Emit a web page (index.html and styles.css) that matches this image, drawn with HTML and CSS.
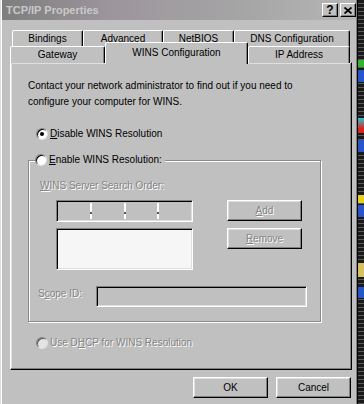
FILE: index.html
```html
<!DOCTYPE html>
<html>
<head>
    <title>TCP/IP Properties</title>
    <link rel="stylesheet" href="styles.css">
</head>
<body>

    <div class="dialog">
        <div class="titlebar">
            <span class="title">TCP/IP Properties</span>
            <div class="caption-btns">
                <span class="cap-btn help">?</span>
                <span class="cap-btn">
                    <svg width="8" height="7" viewBox="0 0 8 7"><path d="M0.5 0.5L7.5 6.5M7.5 0.5L0.5 6.5" stroke="#000" stroke-width="1.8"/></svg>
                </span>
            </div>
        </div>

        <div class="dialog-body">
            <div class="tabs">
                <div class="tab-row back">
                    <div class="tab w-bindings">Bindings</div>
                    <div class="tab w-advanced">Advanced</div>
                    <div class="tab w-netbios">NetBIOS</div>
                    <div class="tab w-dns">DNS Configuration</div>
                </div>
                <div class="tab-row front">
                    <div class="tab w-gateway">Gateway</div>
                    <div class="tab w-wins active">WINS Configuration</div>
                    <div class="tab w-ip">IP Address</div>
                </div>
            </div>

            <div class="panel">
                <p class="intro">Contact your network administrator to find out if you need to configure your computer for WINS.</p>

                <div class="radio-row disable-row">
                    <span class="radio checked"></span>
                    <span><u>D</u>isable WINS Resolution</span>
                </div>

                <fieldset class="group">
                    <legend class="radio-row">
                        <span class="radio"></span>
                        <span><u>E</u>nable WINS Resolution:</span>
                    </legend>
                    <div class="group-body">
                        <div class="search-label disabled"><u>W</u>INS Server Search Order:</div>
                        <div class="search-grid">
                            <div class="field ip-field">
                                <span class="octet"></span><span class="sep"></span>
                                <span class="octet"></span><span class="sep"></span>
                                <span class="octet"></span><span class="sep"></span>
                                <span class="octet"></span>
                            </div>
                            <button class="btn disabled"><u>A</u>dd</button>
                            <div class="field list-field"></div>
                            <button class="btn disabled"><u>R</u>emove</button>
                        </div>
                        <div class="scope-row">
                            <span class="scope-label disabled">S<u>c</u>ope ID:</span>
                            <div class="field scope-field"></div>
                        </div>
                    </div>
                </fieldset>

                <div class="radio-row dhcp-row disabled">
                    <span class="radio dim"></span>
                    <span>Use D<u>H</u>CP for WINS Resolution</span>
                </div>
            </div>

            <div class="footer">
                <button class="btn">OK</button>
                <button class="btn">Cancel</button>
            </div>
        </div>
    </div>

    <div class="desktop-strip">
        <span class="blip green"></span>
        <span class="blip blue"></span>
        <span class="blip cyan"></span>
        <span class="blip blue second"></span>
        <span class="blip yellow"></span>
        <span class="blip blue third"></span>
        <span class="blip yellow late"></span>
        <span class="blip blue last"></span>
    </div>

</body>
</html>
```

FILE: styles.css
```css
* {
    box-sizing: border-box;
}

body {
    margin: 0;
    height: 404px;
    overflow: hidden;
    display: flex;
    background-color: #111;
    color: #000;
    font-family: "Liberation Sans", Arial, sans-serif;
    font-size: 10px;
}

u {
    text-decoration-thickness: 1px;
    text-underline-offset: 1px;
}

.dialog {
    width: 358px;
    height: 404px;
    flex-shrink: 0;
    background-color: #c0c0c0;
    border-left: 1px solid #dfdfdf;
    border-right: 1px solid #000;
    box-shadow: inset 1px 0 #fff, inset -1px 0 #808080;
    padding: 0 1px;
    display: flex;
    flex-direction: column;
}

/* title bar (inactive) */
.titlebar {
    height: 20px;
    background: linear-gradient(to right, #7e7e7e, #9c959c 30%, #a6a6a6 70%, #b6b6b6);
    display: flex;
    align-items: center;
    justify-content: space-between;
    padding-left: 4px;
}

.title {
    color: #c9c9c9;
    font-size: 11px;
    font-weight: bold;
}

.caption-btns {
    display: flex;
    gap: 2px;
}

.cap-btn {
    width: 16px;
    height: 14px;
    background-color: #c0c0c0;
    border: 1px solid;
    border-color: #fff #000 #000 #fff;
    box-shadow: inset -1px -1px #808080;
    display: flex;
    align-items: center;
    justify-content: center;
}

.cap-btn.help {
    font-size: 12px;
    font-weight: bold;
    line-height: 12px;
}

.dialog-body {
    padding: 10px 4px 0 8px;
}

/* tabs */
.tabs {
    display: flex;
    flex-direction: column;
}

.tab-row {
    display: flex;
    align-items: flex-start;
    height: 16px;
}

.tab-row.back {
    margin-left: 2px;
}

.tab {
    height: 17px;
    background-color: #c0c0c0;
    border: 1px solid;
    border-bottom: 0;
    border-color: #fff #000 transparent #fff;
    border-radius: 2px 2px 0 0;
    box-shadow: inset -1px 0 #808080;
    display: flex;
    align-items: center;
    justify-content: center;
    padding-bottom: 1px;
}

.tab.active {
    height: 22px;
    margin-top: -4px;
    padding-bottom: 3px;
    position: relative;
    z-index: 1;
}

.w-bindings { width: 71px; }
.w-advanced { width: 80px; }
.w-netbios { width: 71px; }
.w-dns { width: 116px; }
.w-gateway { width: 95px; }
.w-wins { width: 143px; }
.w-ip { width: 102px; }

/* tab page */
.panel {
    height: 308px;
    border: 1px solid;
    border-color: #fff #000 #000 #fff;
    box-shadow: inset -1px -1px #808080, inset 1px 1px #dfdfdf;
    padding: 15px 0 0 17px;
}

.intro {
    margin: 0;
    width: 290px;
    line-height: 16px;
}

.radio-row {
    display: flex;
    align-items: center;
    gap: 2px;
    height: 14px;
    line-height: 14px;
}

.disable-row {
    margin: 17px 0 0 8px;
}

.radio {
    width: 12px;
    height: 12px;
    border-radius: 50%;
    background-color: #fff;
    border: 1px solid;
    border-color: #808080 #dfdfdf #dfdfdf #808080;
    box-shadow: inset 1px 1px #000;
    position: relative;
}

.radio.checked::after {
    content: "";
    position: absolute;
    left: 3px;
    top: 3px;
    width: 4px;
    height: 4px;
    border-radius: 50%;
    background-color: #000;
}

.radio.dim {
    background-color: #e4e4e4;
    box-shadow: inset 1px 1px #555;
}

.disabled {
    color: #858585;
    text-shadow: 1px 1px 0 #fff;
}

/* group box */
.group {
    width: 293px;
    margin: 12px 0 0 0;
    padding: 0;
    border: 1px solid #8a8a8a;
    box-shadow: inset 1px 1px #fff, 1px 1px #fff;
}

.group legend {
    margin-left: 6px;
    padding: 0 3px 0 0;
    background-color: #c0c0c0;
}

.group-body {
    padding: 12px 0 14px 0;
}

.search-label {
    margin-left: 11px;
    line-height: 14px;
}

.search-grid {
    display: grid;
    grid-template-columns: 137px 75px;
    column-gap: 34px;
    row-gap: 6px;
    align-items: start;
    margin: 7px 0 0 27px;
}

.field {
    border: 1px solid;
    border-color: #808080 #fff #fff #808080;
    box-shadow: inset 1px 1px #000, inset -1px -1px #dfdfdf;
    background-color: #c0c0c0;
}

.ip-field {
    height: 22px;
    display: flex;
    padding: 2px 2px;
}

.octet {
    flex: 1;
}

.sep {
    width: 2px;
    background-color: #fff;
    position: relative;
}

.sep::after {
    content: "";
    position: absolute;
    left: 0;
    bottom: 5px;
    width: 2px;
    height: 2px;
    background-color: #555;
}

.list-field {
    height: 42px;
    background-color: #f6f6f6;
}

.scope-row {
    display: flex;
    align-items: center;
    margin-top: 16px;
}

.scope-label {
    width: 58px;
    margin-left: 9px;
    margin-top: -6px;
}

.scope-field {
    width: 211px;
    height: 21px;
}

.dhcp-row {
    margin: 14px 0 0 8px;
}

/* buttons */
.btn {
    width: 75px;
    height: 21px;
    padding: 0;
    background-color: #c0c0c0;
    border: 1px solid;
    border-color: #fff #000 #000 #fff;
    box-shadow: inset -1px -1px #808080, inset 1px 1px #dfdfdf;
    font-family: inherit;
    font-size: 10px;
    color: #000;
}

.btn.disabled {
    color: #858585;
}

.footer {
    display: flex;
    justify-content: flex-end;
    gap: 8px;
    margin-top: 7px;
    padding-right: 1px;
}

/* bit of desktop to the right of the window */
.desktop-strip {
    flex: 1;
    display: flex;
    flex-direction: column;
    padding-top: 60px;
    background: repeating-linear-gradient(to bottom, #1a1a1a 0, #1a1a1a 3px, #5a5a5a 3px, #5a5a5a 4px);
}

.blip {
    height: 7px;
    width: 100%;
}

.blip.green { background-color: #2fb52f; }
.blip.blue { height: 12px; margin-top: 3px; background-color: #2656c8; }
.blip.cyan { height: 15px; margin-top: 36px; background: linear-gradient(#29c7d0, #d22 70%); }
.blip.blue.second { margin-top: 7px; }
.blip.yellow { height: 8px; margin-top: 43px; background-color: #e8d021; }
.blip.blue.third { margin-top: 2px; }
.blip.yellow.late { height: 14px; margin-top: 46px; background-color: #d8c060; }
.blip.blue.last { height: 11px; margin-top: 10px; }
```
